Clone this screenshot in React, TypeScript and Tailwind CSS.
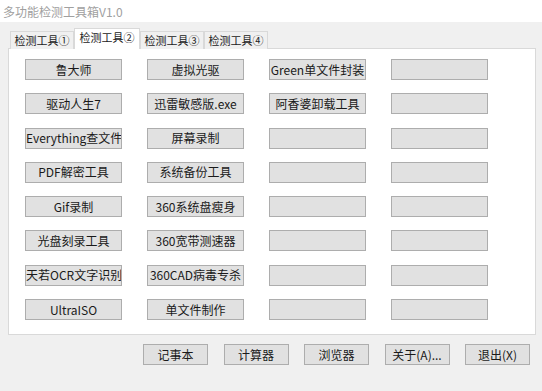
const tools: string[][] = [
  ["鲁大师", "虚拟光驱", "Green单文件封装", ""],
  ["驱动人生7", "迅雷敏感版.exe", "阿香婆卸载工具", ""],
  ["Everything查文件", "屏幕录制", "", ""],
  ["PDF解密工具", "系统备份工具", "", ""],
  ["Gif录制", "360系统盘瘦身", "", ""],
  ["光盘刻录工具", "360宽带测速器", "", ""],
  ["天若OCR文字识别", "360CAD病毒专杀", "", ""],
  ["UltraISO", "单文件制作", "", ""],
];

const tabs = ["检测工具①", "检测工具②", "检测工具③", "检测工具④"];
const footer = ["记事本", "计算器", "浏览器", "关于(A)...", "退出(X)"];

const font = "font-['SimSun','Noto_Sans_CJK_SC',sans-serif]";

function WinButton({ label, width }: { label: string; width: string }) {
  return (
    <button
      type="button"
      className={`${width} h-[21px] border border-[#adadad] bg-[#e1e1e1] text-[12px] leading-none text-[#1a1a1a] whitespace-nowrap overflow-hidden`}
    >
      {label}
    </button>
  );
}

export default function App() {
  return (
    <div className={`w-[542px] h-[391px] bg-[#f0f0f0] ${font} overflow-hidden`}>
      <div className="h-[22px] bg-white pl-[3px] pt-[3px] text-[12px] text-[#a0a0a0]">多功能检测工具箱V1.0</div>

      <div className="flex items-end h-[27px] pl-[10px]">
        {tabs.map((t, i) =>
          i === 1 ? (
            <div
              key={t}
              className="relative z-10 h-[21px] w-[66px] border border-b-0 border-[#d9d9d9] bg-white pt-[3px] text-center text-[11px] leading-none text-[#222]"
            >
              {t}
            </div>
          ) : (
            <div
              key={t}
              className="h-[18px] w-[64px] border border-b-0 border-[#d9d9d9] bg-[#f0f0f0] pt-[3px] text-center text-[11px] leading-none text-[#222]"
            >
              {t}
            </div>
          )
        )}
      </div>

      <div className="-mt-[1px] ml-[8px] h-[287px] w-[528px] border border-[#d9d9d9] bg-white pl-[16px] pt-[10px]">
        <div className="grid grid-cols-[97px_97px_97px_97px] gap-x-[25px] gap-y-[13.3px]">
          {tools.flat().map((label, i) => (
            <WinButton key={i} label={label} width="w-[97px]" />
          ))}
        </div>
      </div>

      <div className="mt-[9px] flex justify-end gap-[15.5px] pr-[12px]">
        {footer.map((f) => (
          <WinButton key={f} label={f} width="w-[65px]" />
        ))}
      </div>
    </div>
  );
}
